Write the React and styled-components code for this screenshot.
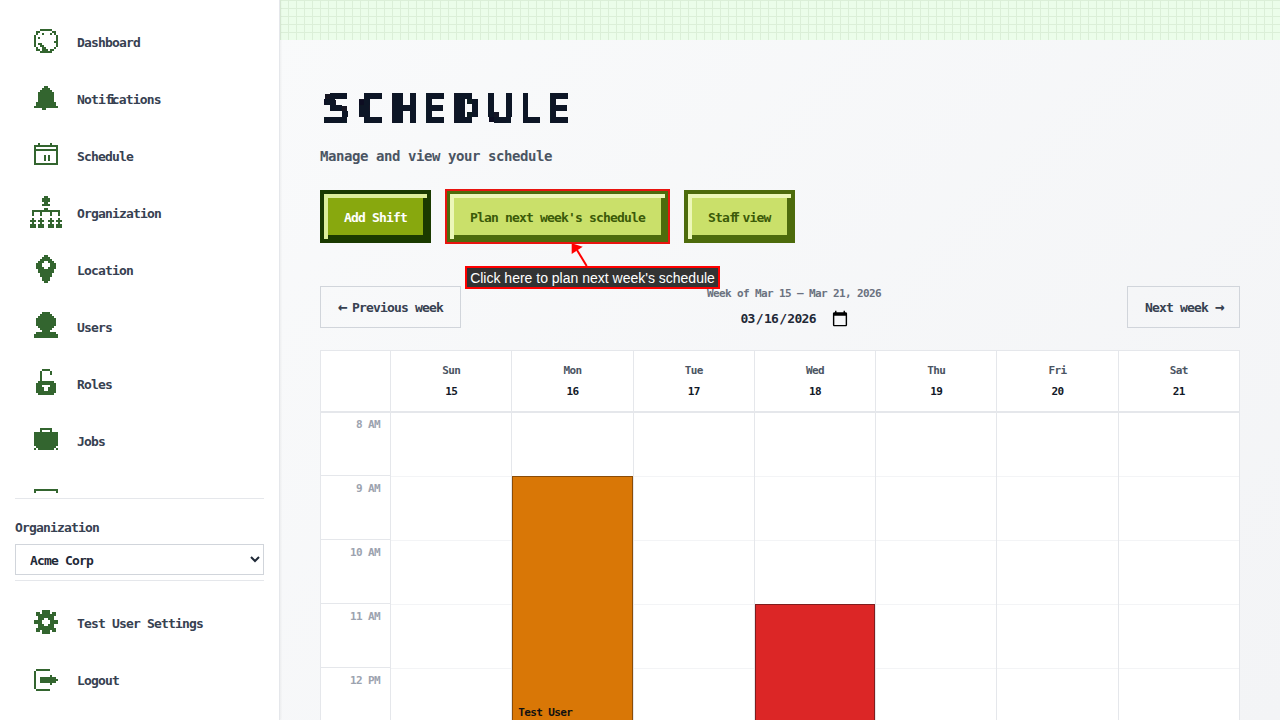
import React from 'react'
import styled, {createGlobalStyle} from 'styled-components'

const GlobalStyle = createGlobalStyle`
  html, body {
    margin: 0;
    height: 720px;
    overflow: hidden;
    background: #f9fafb;
  }
  * {
    box-sizing: border-box;
  }
`

const monoFont = `"DejaVu Sans Mono", "Liberation Mono", monospace`

const ICONS = {
  dashboard: [
    '', '',
    '.....######.....',
    '...##......##...',
    '...#..#...#.#...',
    '..#..........#..',
    '..#.#........#..',
    '..#..........#..',
    '..#.........##..',
    '..#.##.......#..',
    '..#..##......#..',
    '...#..##....#...',
    '...##.###.##....',
    '.....######.....',
  ],
  bell: [
    '', '',
    '.......##.......',
    '......####......',
    '.....######.....',
    '....########....',
    '....########....',
    '....########....',
    '....########....',
    '....########....',
    '...##########...',
    '...##########...',
    '..############..',
    '......##........',
  ],
  calendar: [
    '', '',
    '....#.....#.....',
    '..############..',
    '..#..........#..',
    '..############..',
    '..#..........#..',
    '..#..........#..',
    '..#....#.#...#..',
    '..#....#.#...#..',
    '..#....#.#...#..',
    '..#..........#..',
    '..############..',
  ],
  organization: [
    '.......##.......',
    '......####......',
    '......####......',
    '.......##.......',
    '......####......',
    '................',
    '.......##.......',
    '.##############.',
    '.#...#....#...#.',
    '.#...#....#...#.',
    '................',
    '.#...#....#...#.',
    '###.###..###.###',
    '.#...#....#...#.',
    '###.###..###.###',
    '###.###..###.###',
  ],
  location: [
    '',
    '.......##.......',
    '......####......',
    '.....######.....',
    '....###..###....',
    '...###....###...',
    '...###....###...',
    '...####..####...',
    '....########....',
    '....########....',
    '.....######.....',
    '.....######.....',
    '......####......',
    '......####......',
    '.......##.......',
  ],
  users: [
    '',
    '......####......',
    '.....######.....',
    '....########....',
    '...##########...',
    '...##########...',
    '...##########...',
    '...##########...',
    '....########....',
    '.....######.....',
    '......####......',
    '...##########...',
    '..############..',
    '..############..',
  ],
  roles: [
    '',
    '......####......',
    '.....#....#.....',
    '.....#....#.....',
    '.....#..........',
    '.....#..........',
    '.....#..........',
    '....########....',
    '...##########...',
    '...###....###...',
    '...####..####...',
    '...####..####...',
    '...##########...',
    '....########....',
  ],
  jobs: [
    '', '',
    '.....######.....',
    '.....#....#.....',
    '..############..',
    '..############..',
    '..############..',
    '..############..',
    '..############..',
    '..############..',
    '..############..',
    '...##########...',
    '..#.########.#..',
  ],
  clipped: [
    '', '', '', '',
    '..############..',
    '..#..........#..',
  ],
  settings: [
    '', '',
    '......####......',
    '...##.####.##...',
    '...##########...',
    '....########....',
    '....###..###....',
    '..####....####..',
    '..####....####..',
    '....###..###....',
    '....########....',
    '...##########...',
    '...##.####.##...',
    '......####......',
  ],
  logout: [
    '', '', '',
    '...#######......',
    '..#.............',
    '..#.............',
    '..#.......#.....',
    '..#..########...',
    '..#..#########..',
    '..#..########...',
    '..#.......#.....',
    '..#.............',
    '..#.............',
    '...#######......',
  ],
}

function PixelIcon({name}) {
  // each # is one 2px block on a 16 x 16 grid
  const d = ICONS[name]
    .flatMap((row, y) => [...row].map((c, x) => (c === '#' ? `M${x} ${y}h1v1h-1z` : '')))
    .join('')
  return (
    <IconSvg viewBox="0 0 16 16">
      <path d={d} fill="#33652f" />
    </IconSvg>
  )
}

const IconSvg = styled.svg`
  width: 32px;
  height: 32px;
  flex: none;
  shape-rendering: crispEdges;
`

// the original font joins ff and fi into one cell
const Tight = styled.span`
  letter-spacing: -4.5px;
`

const Arrow = styled.span`
  font-size: 16px;
  line-height: 14px;
  letter-spacing: -2.63px;
`

const navItems = [
  ['dashboard', 'Dashboard'],
  ['bell', <>Noti<Tight>fi</Tight>cations</>],
  ['calendar', 'Schedule'],
  ['organization', 'Organization'],
  ['location', 'Location'],
  ['users', 'Users'],
  ['roles', 'Roles'],
  ['jobs', 'Jobs'],
  ['clipped', ''],
]

const days = [
  ['Sun', 15],
  ['Mon', 16],
  ['Tue', 17],
  ['Wed', 18],
  ['Thu', 19],
  ['Fri', 20],
  ['Sat', 21],
]

const hours = ['8 AM', '9 AM', '10 AM', '11 AM', '12 PM']

const events = {
  Mon: {kind: 'orange', top: 63, height: 320, label: 'Test User'},
  Wed: {kind: 'red', top: 191, height: 200, label: ''},
}

function App() {
  return (
    <Page>
      <GlobalStyle />
      <FilterDefs aria-hidden="true">
        <filter id="pixelate" x="0" y="0" width="1" height="1">
          <feFlood x="2" y="2" width="2" height="2" />
          <feComposite width="6" height="6" />
          <feTile result="dots" />
          <feComposite in="SourceGraphic" in2="dots" operator="in" />
          <feMorphology operator="dilate" radius="2" />
          <feComponentTransfer>
            <feFuncA type="discrete" tableValues="0 1" />
          </feComponentTransfer>
        </filter>
      </FilterDefs>
      <Sidebar>
        <NavList>
          {navItems.map(([icon, label]) => (
            <NavItem key={icon}>
              <PixelIcon name={icon} />
              <span>{label}</span>
            </NavItem>
          ))}
        </NavList>
        <OrgBlock>
          <OrgLabel>Organization</OrgLabel>
          <OrgSelect defaultValue="acme">
            <option value="acme">Acme Corp</option>
          </OrgSelect>
        </OrgBlock>
        <FooterNav>
          <NavItem>
            <PixelIcon name="settings" />
            <span>Test User Settings</span>
          </NavItem>
          <NavItem>
            <PixelIcon name="logout" />
            <span>Logout</span>
          </NavItem>
        </FooterNav>
      </Sidebar>

      <Main>
        <Banner />
        <Content>
          <Title>
            {[...'SCHEDULE'].map((letter, i) => (
              <TitleLetter key={i} $narrow={letter === 'E' || letter === 'L'}>
                <TitleGlyph $narrow={letter === 'E' || letter === 'L'}>{letter}</TitleGlyph>
              </TitleLetter>
            ))}
          </Title>
          <Subtitle>Manage and view your schedule</Subtitle>
          <Actions>
            <ActionButton $primary>Add Shift</ActionButton>
            <ActionButton $highlighted>Plan next week's schedule</ActionButton>
            <ActionButton>Sta<Tight>ff</Tight> view</ActionButton>
            <Pointer viewBox="0 0 24 28">
              <path d="M11 10L20.7 26" stroke="#ff0000" strokeWidth="2" fill="none" />
              <path d="M5.7 3.3L16.7 6.7L5.7 14Z" fill="#ff0000" />
            </Pointer>
            <Hint>Click here to plan next week's schedule</Hint>
          </Actions>

          <WeekBar>
            <WeekButton><Arrow>←</Arrow> Previous week</WeekButton>
            <WeekCenter>
              <WeekLabel>Week of Mar 15 – Mar 21, 2026</WeekLabel>
              <DateInput type="date" defaultValue="2026-03-16" />
            </WeekCenter>
            <WeekButton>Next week <Arrow>→</Arrow></WeekButton>
          </WeekBar>

          <Calendar>
            <CornerCell />
            {days.map(([name, num]) => (
              <DayHead key={name}>
                <DayName>{name}</DayName>
                <DayNum>{num}</DayNum>
              </DayHead>
            ))}
            <TimeColumn>
              {hours.map((h) => (
                <TimeCell key={h}>{h}</TimeCell>
              ))}
            </TimeColumn>
            {days.map(([name]) => (
              <DayColumn key={name}>
                {hours.map((h) => (
                  <HourCell key={h} />
                ))}
                {events[name] && (
                  <EventBlock
                    $kind={events[name].kind}
                    style={{top: events[name].top, height: events[name].height}}
                  >
                    <EventLabel>{events[name].label}</EventLabel>
                  </EventBlock>
                )}
              </DayColumn>
            ))}
          </Calendar>
        </Content>
      </Main>
    </Page>
  )
}

const FilterDefs = styled.svg`
  position: absolute;
  width: 0;
  height: 0;
`

const Page = styled.div`
  display: flex;
  width: 1280px;
  height: 720px;
  overflow: hidden;
  font-family: ${monoFont};
  font-weight: 700;
`

const Sidebar = styled.aside`
  width: 280px;
  flex: none;
  height: 720px;
  display: flex;
  flex-direction: column;
  padding: 0 15px;
  background: #ffffff;
  border-right: 1px solid #e5e7eb;
  box-shadow: 1px 0 2px rgba(0, 0, 0, 0.05);
  position: relative;
  z-index: 1;
`

const NavList = styled.nav`
  height: 493px;
  flex: none;
  overflow: hidden;
  padding: 13px 0 0 15px;
  display: flex;
  flex-direction: column;
  gap: 1px;
`

const NavItem = styled.div`
  display: flex;
  align-items: center;
  gap: 15px;
  padding: 12px 0;
  height: 56px;
  flex: none;
  color: #374151;
  font-size: 13px;
  letter-spacing: -0.83px;
  span {
    padding-top: 2px;
  }
`

const OrgBlock = styled.div`
  margin-top: 5px;
  border-top: 1px solid #e5e7eb;
  border-bottom: 1px solid #e5e7eb;
  height: 83px;
  padding-top: 19px;
`

const OrgLabel = styled.div`
  color: #374151;
  font-size: 13px;
  letter-spacing: -0.83px;
  line-height: 20px;
  margin-bottom: 6px;
`

const OrgSelect = styled.select`
  display: block;
  width: 249px;
  height: 31px;
  padding: 2px 10px 0;
  border: 1px solid #d1d5db;
  border-radius: 0;
  background: #ffffff;
  color: #1f2937;
  font-family: ${monoFont};
  font-weight: 700;
  font-size: 13px;
  letter-spacing: -0.83px;
`

const FooterNav = styled.div`
  padding: 13px 0 0 15px;
  display: flex;
  flex-direction: column;
  gap: 1px;
`

const Main = styled.main`
  flex: 1;
  min-width: 0;
  height: 720px;
  background: linear-gradient(135deg, #f9fafb, #f3f4f6);
`

const Banner = styled.div`
  height: 40px;
  background-color: #ebfdea;
  background-image:
    linear-gradient(to right, #dbefd8 1px, transparent 1px),
    linear-gradient(to bottom, #dbefd8 1px, transparent 1px);
  background-size: 8px 8px;
`

const Content = styled.div`
  padding: 47px 40px 0 40px;
`

const Title = styled.h1`
  display: flex;
  margin: 0 0 0 4px;
  height: 44px;
  font-family: "DejaVu Sans Mono", monospace;
  font-size: 41px;
  line-height: 44px;
  font-weight: 700;
  color: #111827;
`

const TitleLetter = styled.span`
  display: block;
  width: ${(p) => (p.$narrow ? '28px' : '34px')};
  height: 44px;
  filter: url(#pixelate);
`

const TitleGlyph = styled.span`
  display: block;
  width: 25px;
  -webkit-text-stroke: 0.6px #111827;
  transform-origin: left center;
  transform: scaleX(${(p) => (p.$narrow ? 0.72 : 1)});
`

const Subtitle = styled.p`
  margin: 13px 0 0;
  color: #4b5563;
  font-size: 14px;
  line-height: 24px;
  letter-spacing: -0.43px;
`

const Actions = styled.div`
  position: relative;
  display: flex;
  gap: 15px;
  margin-top: 22px;
`

const buttonColors = (p) => {
  if (p.$primary) return {fill: '#88a80e', edge: '#1a3a00', light: '#dcee9a', text: '#ffffff'}
  return {fill: '#cae06a', edge: '#4d6b0c', light: '#ecf7b8', text: '#3b5a08'}
}

const ActionButton = styled.button`
  height: 53px;
  padding: 2px 20px 0;
  font-family: ${monoFont};
  font-weight: 700;
  font-size: 13px;
  letter-spacing: -0.83px;
  background: ${(p) => buttonColors(p).fill};
  color: ${(p) => buttonColors(p).text};
  border: 4px solid ${(p) => buttonColors(p).edge};
  box-shadow:
    inset 4px 4px 0 ${(p) => buttonColors(p).light},
    inset -4px -4px 0 ${(p) => buttonColors(p).edge};
  outline: ${(p) => (p.$highlighted ? '2px solid #e8140f' : 'none')};
  outline-offset: -1px;
`

const Hint = styled.div`
  position: absolute;
  left: 145px;
  top: 76px;
  width: 255px;
  height: 23px;
  z-index: 2;
  border: 2px solid #ff0000;
  background: #333333;
  color: #ffffff;
  font-family: "Liberation Sans", Arial, sans-serif;
  font-weight: 400;
  font-size: 14px;
  line-height: 20px;
  text-align: center;
  white-space: nowrap;
`

const Pointer = styled.svg`
  position: absolute;
  left: 246px;
  top: 50px;
  width: 24px;
  height: 28px;
  z-index: 2;
`

const WeekBar = styled.div`
  display: flex;
  justify-content: space-between;
  align-items: center;
  margin-top: 43px;
  height: 42px;
`

const WeekButton = styled.button`
  height: 42px;
  padding: 0 17px;
  background: transparent;
  border: 1px solid #d1d5db;
  color: #374151;
  font-family: ${monoFont};
  font-weight: 700;
  font-size: 13px;
  letter-spacing: -0.83px;
`

const WeekCenter = styled.div`
  display: flex;
  flex-direction: column;
  align-items: center;
`

const WeekLabel = styled.div`
  color: #6b7280;
  font-size: 11px;
  line-height: 14px;
  letter-spacing: -0.62px;
`

const DateInput = styled.input`
  margin-top: 9px;
  border: none;
  background: transparent;
  color: #1f2937;
  font-family: ${monoFont};
  font-weight: 700;
  font-size: 13px;
  letter-spacing: -0.7px;
  &::-webkit-calendar-picker-indicator {
    width: 18px;
    height: 18px;
    padding: 0;
  }
`

const Calendar = styled.div`
  display: grid;
  grid-template-columns: 69px repeat(7, 1fr);
  margin-top: 22px;
  background: #ffffff;
  border: 1px solid #e5e7eb;
  border-bottom: none;
`

const CornerCell = styled.div`
  height: 62px;
  border-bottom: 2px solid #e5e7eb;
`

const DayHead = styled.div`
  height: 62px;
  border-left: 1px solid #e5e7eb;
  border-bottom: 2px solid #e5e7eb;
  text-align: center;
  padding-top: 12px;
`

const DayName = styled.div`
  color: #4b5563;
  font-size: 11px;
  line-height: 16px;
  letter-spacing: -0.62px;
`

const DayNum = styled.div`
  margin-top: 5px;
  color: #111827;
  font-size: 11px;
  line-height: 16px;
  letter-spacing: -0.62px;
`

const TimeColumn = styled.div`
  margin-top: -1px;
`

const TimeCell = styled.div`
  height: 64px;
  padding: 6px 10px 0 0;
  text-align: right;
  color: #9ca3af;
  font-size: 11px;
  line-height: 14px;
  letter-spacing: -0.62px;
  border-bottom: 1px solid #e5e7eb;
`

const DayColumn = styled.div`
  position: relative;
  border-left: 1px solid #e5e7eb;
`

const HourCell = styled.div`
  height: 64px;
  border-bottom: 1px solid #f3f4f6;
`

const eventColors = {
  orange: {bg: '#d97706', edge: '#8a4c08'},
  red: {bg: '#dc2626', edge: '#7f1d1d'},
}

const EventBlock = styled.div`
  position: absolute;
  left: 0;
  right: 0;
  background: ${(p) => eventColors[p.$kind].bg};
  border: 1px solid ${(p) => eventColors[p.$kind].edge};
  padding: 229px 5px 0;
`

const EventLabel = styled.div`
  color: #111111;
  font-size: 11px;
  line-height: 14px;
  letter-spacing: -0.62px;
`

export default App
